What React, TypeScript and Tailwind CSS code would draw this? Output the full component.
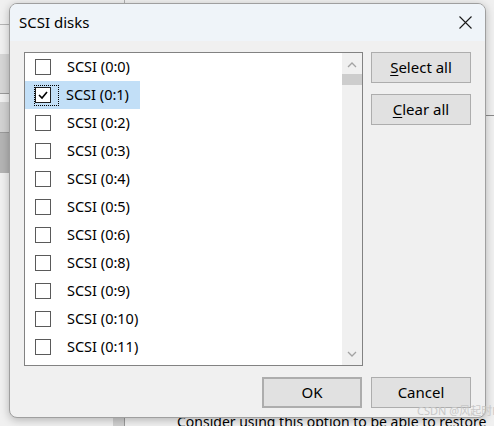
import React from "react";

const disks = ["0:0", "0:1", "0:2", "0:3", "0:4", "0:5", "0:6", "0:8", "0:9", "0:10", "0:11", "0:12"];

function Box({ checked }: { checked?: boolean }) {
  return (
    <span
      className={
        "flex h-[16px] w-[16px] items-center justify-center border bg-white " +
        (checked ? "border-[#1f1f1f]" : "border-[#5a5a5a]")
      }
    >
      {checked && (
        <svg width="12" height="12" viewBox="0 0 12 12">
          <polyline points="2,6 5,9 10,3" fill="none" stroke="#000" strokeWidth="1.6" />
        </svg>
      )}
    </span>
  );
}

function Row({ id, selected }: { id: string; selected?: boolean }) {
  return (
    <div className="flex h-[28px] items-center">
      <div className={"flex h-full w-[115px] items-center pl-[9px] " + (selected ? "bg-[#c2dff7]" : "")}>
        {selected ? (
          <span className="flex h-[21px] w-[25px] items-center border border-dotted border-black">
            <Box checked />
          </span>
        ) : (
          <span className="ml-px">
            <Box />
          </span>
        )}
        <span className={"text-[14.5px] text-black " + (selected ? "ml-[7px]" : "ml-[16px]")}>SCSI ({id})</span>
      </div>
    </div>
  );
}

function Btn({ children, className }: { children: React.ReactNode; className?: string }) {
  return (
    <button
      className={
        "flex h-[31px] w-[100px] items-center justify-center border border-[#adadad] bg-[#e1e1e1] text-[15px] text-black " +
        (className ?? "")
      }
    >
      {children}
    </button>
  );
}

export default function App() {
  return (
    <div className="relative h-[426px] w-[494px] overflow-hidden bg-[#f0f0f0] font-['Noto_Sans',sans-serif]">
      {/* window behind */}
      <div className="absolute left-0 top-[24px] h-px w-[10px] bg-[#b5b5b5]" />
      <div className="absolute left-0 top-[54px] h-[39px] w-[10px] bg-[#d6d6d6]" />
      <div className="absolute left-0 top-[93px] h-px w-[10px] bg-[#9a9a9a]" />
      <div className="absolute left-0 top-[102px] h-[30px] w-[10px] bg-[#d2d2d2]" />
      <div className="absolute left-0 top-[132px] h-px w-[10px] bg-[#9a9a9a]" />
      <div className="absolute left-0 top-[133px] h-[40px] w-[10px] bg-[#b4b4b4]" />
      <div className="absolute left-[124px] top-0 h-[4px] w-px bg-[#b0b0b0]" />
      <div className="absolute right-0 top-[115px] h-px w-[9px] bg-[#8a8a8a]" />
      <div className="absolute left-[113px] top-[418px] h-[8px] w-[11px] bg-[#d0d0d0]" />
      <div className="absolute left-[124px] top-[418px] h-[8px] w-px bg-[#9a9a9a]" />
      <div className="absolute left-[177px] top-[412px] whitespace-nowrap text-[14px] leading-[20px] text-black">
        Consider using this option to be able to restore
      </div>

      {/* dialog */}
      <div className="absolute left-[9px] top-[3px] flex h-[415px] w-[477px] flex-col overflow-hidden rounded-[8px] border border-[#9f9f9f] bg-[#f0f0f0] shadow-[0_2px_8px_rgba(0,0,0,0.25)]">
        <div className="flex h-[37px] items-center justify-between bg-[#eff4f9] pl-[9px] pr-[13px]">
          <span className="text-[15px] text-black">SCSI disks</span>
          <svg width="13" height="13" viewBox="0 0 13 13">
            <path d="M0.5 0.5 L12.5 12.5 M12.5 0.5 L0.5 12.5" stroke="#1a1a1a" strokeWidth="1.1" />
          </svg>
        </div>
        <div className="flex flex-col pl-[14px] pr-[14px] pt-[11px]">
          <div className="flex gap-[8px]">
            <div className="flex h-[314px] w-[339px] border border-[#828282] bg-white">
              <div className="flex-1 overflow-hidden">
                {disks.map((d) => (
                  <Row key={d} id={d} selected={d === "0:1"} />
                ))}
              </div>
              <div className="flex w-[20px] flex-col items-center bg-[#f0f0f0]">
                <svg className="mt-[9px]" width="10" height="6" viewBox="0 0 10 6">
                  <polyline points="1,5 5,1 9,5" fill="none" stroke="#a3a3a3" strokeWidth="1.3" />
                </svg>
                <div className="mt-[6px] h-[11px] w-full bg-[#cdcdcd]" />
                <div className="flex-1" />
                <svg className="mb-[8px]" width="10" height="6" viewBox="0 0 10 6">
                  <polyline points="1,1 5,5 9,1" fill="none" stroke="#a3a3a3" strokeWidth="1.3" />
                </svg>
              </div>
            </div>
            <div className="flex flex-col gap-[11px]">
              <Btn>
                <span className="underline underline-offset-2">S</span>elect all
              </Btn>
              <Btn>
                <span className="underline underline-offset-2">C</span>lear all
              </Btn>
            </div>
          </div>
          <div className="mt-[11px] flex justify-end gap-[9px]">
            <Btn className="w-[99px] border-2 border-[#0078d7]">OK</Btn>
            <Btn>Cancel</Btn>
          </div>
        </div>
      </div>

      <div className="absolute left-[417px] top-[404px] whitespace-nowrap text-[11px] leading-[14px] text-[#c8c8c8] font-['Noto_Sans','Noto_Sans_CJK_SC',sans-serif]">
        CSDN @风起时H
      </div>
    </div>
  );
}
